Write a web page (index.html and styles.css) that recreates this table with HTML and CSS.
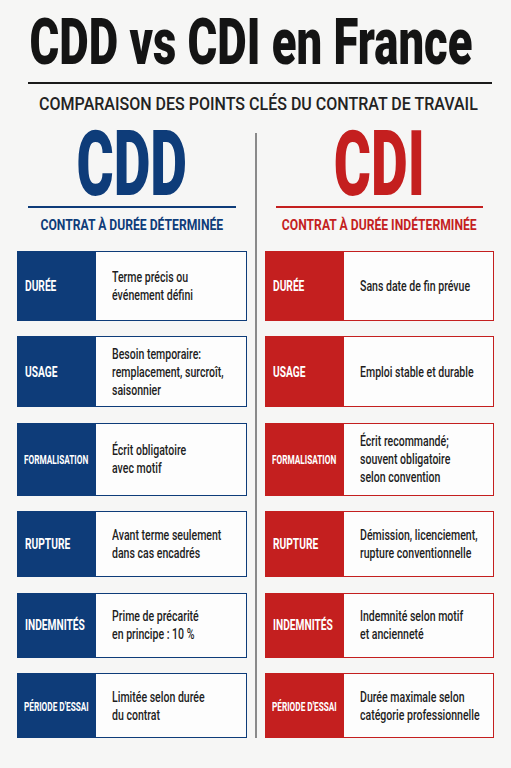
FILE: index.html
```html
<!DOCTYPE html>
<html lang="fr">

<head>
  <meta charset="UTF-8">
  <meta name="viewport" content="width=device-width, initial-scale=1.0">
  <title>CDD vs CDI en France</title>
  <link rel="stylesheet" href="styles.css">
</head>

<body>
  <div class="page">
    <h1 class="main-title"><span class="sq">CDD vs CDI en France</span></h1>
    <div class="main-rule"></div>
    <p class="main-sub"><span class="sq">COMPARAISON DES POINTS CLÉS DU CONTRAT DE TRAVAIL</span></p>

    <div class="compare">
      <!-- colonne CDD -->
      <div class="col-head cdd">
        <div class="big"><span class="sq">CDD</span></div>
        <div class="rule"></div>
        <div class="sub"><span class="sq">CONTRAT À DURÉE DÉTERMINÉE</span></div>
      </div>
      <div class="divider"></div>
      <!-- colonne CDI -->
      <div class="col-head cdi">
        <div class="big"><span class="sq">CDI</span></div>
        <div class="rule"></div>
        <div class="sub"><span class="sq">CONTRAT À DURÉE INDÉTERMINÉE</span></div>
      </div>

      <div class="card cdd">
        <div class="label"><span class="sq">DURÉE</span></div>
        <div class="desc"><span class="sq">Terme précis ou<br>événement défini</span></div>
      </div>
      <div class="card cdi">
        <div class="label"><span class="sq">DURÉE</span></div>
        <div class="desc"><span class="sq">Sans date de fin prévue</span></div>
      </div>

      <div class="card cdd">
        <div class="label"><span class="sq">USAGE</span></div>
        <div class="desc"><span class="sq">Besoin temporaire:<br>remplacement, surcroît,<br>saisonnier</span></div>
      </div>
      <div class="card cdi">
        <div class="label"><span class="sq">USAGE</span></div>
        <div class="desc"><span class="sq">Emploi stable et durable</span></div>
      </div>

      <div class="card cdd">
        <div class="label small"><span class="sq">FORMALISATION</span></div>
        <div class="desc"><span class="sq">Écrit obligatoire<br>avec motif</span></div>
      </div>
      <div class="card cdi">
        <div class="label small"><span class="sq">FORMALISATION</span></div>
        <div class="desc"><span class="sq">Écrit recommandé;<br>souvent obligatoire<br>selon convention</span></div>
      </div>

      <div class="card cdd">
        <div class="label"><span class="sq">RUPTURE</span></div>
        <div class="desc"><span class="sq">Avant terme seulement<br>dans cas encadrés</span></div>
      </div>
      <div class="card cdi">
        <div class="label"><span class="sq">RUPTURE</span></div>
        <div class="desc"><span class="sq">Démission, licenciement,<br>rupture conventionnelle</span></div>
      </div>

      <div class="card cdd">
        <div class="label"><span class="sq">INDEMNITÉS</span></div>
        <div class="desc"><span class="sq">Prime de précarité<br>en principe : 10 %</span></div>
      </div>
      <div class="card cdi">
        <div class="label"><span class="sq">INDEMNITÉS</span></div>
        <div class="desc"><span class="sq">Indemnité selon motif<br>et ancienneté</span></div>
      </div>

      <div class="card cdd">
        <div class="label small"><span class="sq">PÉRIODE D'ESSAI</span></div>
        <div class="desc"><span class="sq">Limitée selon durée<br>du contrat</span></div>
      </div>
      <div class="card cdi">
        <div class="label small"><span class="sq">PÉRIODE D'ESSAI</span></div>
        <div class="desc"><span class="sq">Durée maximale selon<br>catégorie professionnelle</span></div>
      </div>
    </div>
  </div>
</body>

</html>
```

FILE: styles.css
```css
h1,
p,
div {
  padding: 0px;
  margin: 0px;
}

body {
  margin: 0px;
  background: #f6f6f5;
  color: #1a1a1a;
  font-family: Roboto, "Liberation Sans", sans-serif;
  overflow-x: hidden;
}

/* texte condensé : la police installée est trop large */
.sq {
  display: inline-block;
  white-space: nowrap;
  transform: scaleX(var(--sx, 0.7));
}

.page {
  padding: 11px 17px 0px 17px;
}

.main-title {
  display: flex;
  justify-content: center;
  padding-right: 10px;
  font-size: 64px;
  line-height: 64px;
  font-weight: 900;
  color: #141414;
  --sx: 0.71;
}

.main-rule {
  height: 2px;
  margin: 7px 2px 0px 11px;
  background: #1a1a1a;
}

.main-sub {
  display: flex;
  justify-content: center;
  margin-top: 11px;
  padding-left: 6px;
  font-size: 18px;
  line-height: 18px;
  font-weight: 500;
  color: #222;
  --sx: 0.89;
}

.compare {
  display: grid;
  grid-template-columns: minmax(0, 1fr) 2px minmax(0, 1fr);
  grid-template-rows: auto 70px 71px 73px 66px 65px 65px;
  column-gap: 8px;
  row-gap: 15.5px;
  margin-top: 15px;
}

.divider {
  grid-column: 2;
  grid-row: 1 / 8;
  background: #8a8a8a;
  margin: 5px 0px -6px 0px;
}

.cdd {
  --main: #0e3c79;
  grid-column: 1;
}

.cdi {
  --main: #c41f1f;
  grid-column: 3;
}

.col-head {
  grid-row: 1;
  min-width: 0;
  padding: 0px 11px 1px 11px;
  color: var(--main);
}

.col-head .big {
  display: flex;
  justify-content: center;
  font-size: 90px;
  line-height: 74px;
  font-weight: 900;
  --sx: 0.63;
}

.col-head .rule {
  height: 2px;
  margin-top: 4px;
  background: var(--main);
}

.col-head .sub {
  display: flex;
  justify-content: center;
  margin-top: 8px;
  font-size: 15px;
  line-height: 18px;
  font-weight: 700;
  --sx: 0.81;
}

.card {
  display: flex;
  min-width: 0;
  border: 1.5px solid var(--main);
  background: #fdfdfd;
}

.card .label {
  display: flex;
  align-items: center;
  width: 78px;
  flex-shrink: 0;
  padding-left: 7px;
  box-sizing: border-box;
  overflow: hidden;
  background: var(--main);
  color: #fff;
  font-size: 15px;
  font-weight: 700;
  --sx: 0.68;
}

.card .label.small {
  font-size: 13.5px;
  padding-left: 6px;
  --sx: 0.61;
}

.card .label .sq,
.card .desc .sq {
  transform-origin: left center;
}

.card .desc {
  display: flex;
  align-items: center;
  min-width: 0;
  overflow: hidden;
  padding-left: 16px;
  font-size: 15.5px;
  line-height: 18px;
  font-weight: 500;
  color: #1e1e1e;
  --sx: 0.68;
}
```
